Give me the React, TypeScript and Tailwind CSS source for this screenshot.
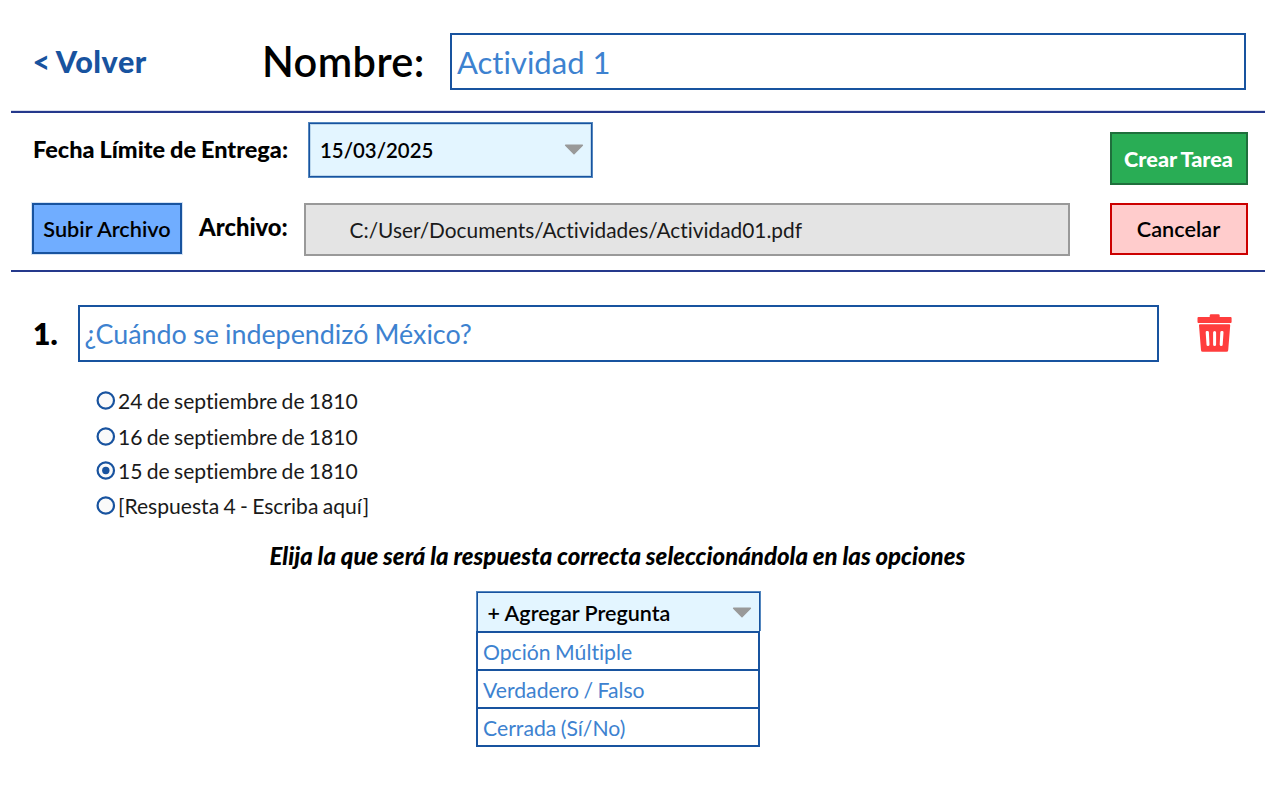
import type { ReactNode } from "react";

function Caret() {
  return (
    <svg width="20" height="12" viewBox="0 0 20 12" className="block shrink-0">
      <path d="M1.6 1.2h16.8L10 9.800z" fill="#999999" stroke="#999999" strokeWidth="1.4" strokeLinejoin="round" />
    </svg>
  );
}

function TrashIcon() {
  return (
    <svg width="36" height="40" viewBox="0 0 36 40" className="-mt-[2px] block shrink-0" fill="#ff3d3d">
      <path d="M12.700 4V2.600a1.300 1.300 0 0 1 1.300-1.300h7.400a1.300 1.300 0 0 1 1.300 1.300V4h10.900a1 1 0 0 1 1 1v3.900a1 1 0 0 1-1 1H1.500a1 1 0 0 1-1-1V5a1 1 0 0 1 1-1z" />
      <path
        fillRule="evenodd"
        d="M3 11.300h29.200a1 1 0 0 1 1 1.100L31.200 37.200a1.700 1.700 0 0 1-1.700 1.600H5.700a1.700 1.700 0 0 1-1.700-1.600L2 12.400a1 1 0 0 1 1-1.100zM10 18a1.300 1.300 0 0 0-1.300 1.400l.8 12a1.500 1.500 0 0 0 3 0l-.6-12A1.400 1.400 0 0 0 10 18zM17.600 18a1.500 1.500 0 0 0-1.500 1.500v12a1.500 1.500 0 0 0 3 0v-12A1.500 1.500 0 0 0 17.600 18zM25.200 18a1.400 1.400 0 0 0-1.900 1.400l-.6 12a1.500 1.500 0 0 0 3 0l.8-12A1.300 1.300 0 0 0 25.200 18z"
      />
    </svg>
  );
}

function Option({ checked = false, className, children }: { checked?: boolean; className: string; children: ReactNode }) {
  return (
    <label className={`flex items-center ${className}`}>
      <svg width="20" height="20" viewBox="0 0 20 20" className="-mt-px block shrink-0">
        <circle cx="9.800" cy="9.500" r="8.200" fill="#fafafa" stroke="#18539f" strokeWidth="2.200" />
        {checked && <circle cx="9.800" cy="9.500" r="3.700" fill="#18539f" />}
      </svg>
      <span className="ml-[2px] text-[21.100px] text-[#1a1a1a] [word-spacing:-1.100px]">{children}</span>
    </label>
  );
}

const questionTypes = ["Opción Múltiple", "Verdadero / Falso", "Cerrada (Sí/No)"];

export default function App() {
  return (
    <main className="h-[800px] w-[1280px] overflow-hidden whitespace-nowrap bg-white font-['Lato',sans-serif] text-black [font-variant-ligatures:none]">
      <header className="flex h-[111px] items-start">
        <a className="ml-[32.500px] mt-[41px] w-[229.500px] text-[30.500px] leading-[40px] font-black tracking-[0.550px] text-[#18539f] [word-spacing:-1.700px]">
          &lt; Volver
        </a>
        <h1 className="mt-[36px] w-[188px] text-[41.500px] leading-[50px] font-semibold tracking-[0.400px]">Nombre:</h1>
        <div className="mt-[33px] flex h-[57px] w-[796px] items-center border-2 border-[#18539f] pt-px pl-[5px] text-[31px] text-[#3d82d0]">
          Actividad 1
        </div>
      </header>

      <section className="mx-[11px] flex h-[161px] w-[1254px] border-y-2 border-[#25398c] shadow-[0_-1px_0_#d9deec]">
        <div className="flex w-[1099px] flex-col">
          <div className="mt-[9px] flex h-[56px] items-center">
            <span className="-mt-px ml-[22px] w-[275px] text-[23.500px] font-black [word-spacing:-0.700px]">Fecha Límite de Entrega:</span>
            <div className="flex h-[56px] w-[285px] items-center justify-between border border-[#5386be] bg-[#e3f5ff] pr-[8px] pl-[11px] shadow-[inset_0_0_0_1px_#18539f,inset_0_0_0_2px_#bcd7ec]">
              <span className="text-[20.400px] font-semibold">15/03/2025</span>
              <Caret />
            </div>
          </div>
          <div className="mt-[25px] flex h-[53px] items-start">
            <button className="ml-[21px] h-[51px] w-[150px] border-2 border-[#18539f] bg-[#70adff] pt-px text-[21.700px] font-semibold shadow-[0_0_0_1px_#d5e3f4]">
              Subir Archivo
            </button>
            <span className="ml-[17px] w-[105px] text-[23.800px] leading-[49px] font-black">Archivo:</span>
            <div className="flex h-[53px] w-[766px] items-center border-2 border-[#999999] bg-[#e4e4e4] pl-[43.500px] text-[20.850px] text-[#1a1a1a]">
              C:/User/Documents/Actividades/Actividad01.pdf
            </div>
          </div>
        </div>
        <div className="flex flex-col pt-[19px]">
          <button className="h-[53px] w-[138px] border-2 border-[#1f6f3c] bg-[#29ad55] pt-px pr-px text-[21.700px] font-black text-white [word-spacing:-0.800px]">
            Crear Tarea
          </button>
          <button className="mt-[18px] h-[52px] w-[138px] border-2 border-[#cc0000] bg-[#ffcccc] pr-px text-[21.700px] font-semibold">Cancelar</button>
        </div>
      </section>

      <section>
        <div className="mt-[33px] flex h-[57px] items-center">
          <span className="ml-[33px] w-[45px] text-[30px] font-extrabold">1.</span>
          <div className="flex h-[57px] w-[1081px] items-center border-2 border-[#18539f] pt-[2px] pl-[4.500px] text-[26.850px] text-[#3d82d0] [word-spacing:-0.700px]">
            ¿Cuándo se independizó México?
          </div>
          <button className="ml-[38px]">
            <TrashIcon />
          </button>
        </div>
        <div className="ml-[96px] mt-[21px] flex flex-col">
          <Option className="h-[36px]">24 de septiembre de 1810</Option>
          <Option className="h-[36px]">16 de septiembre de 1810</Option>
          <Option className="h-[32px]" checked>15 de septiembre de 1810</Option>
          <Option className="h-[38px]">[Respuesta 4 - Escriba aquí]</Option>
        </div>
        <p className="ml-[269.500px] mt-[16px] text-[24px] leading-[30px] font-black italic [word-spacing:-0.350px]">
          Elija la que será la respuesta correcta seleccionándola en las opciones
        </p>
      </section>

      <div className="ml-[476px] mt-[20px] w-[285px]">
        <div className="flex h-[40px] items-center justify-between border border-b-0 border-[#5386be] bg-[#e3f5ff] pt-[3px] pr-[8px] pl-[10.500px] shadow-[inset_1px_1px_0_#18539f,inset_-1px_0_0_#18539f]">
          <span className="text-[21.500px] font-semibold">+ Agregar Pregunta</span>
          <Caret />
        </div>
        <ul className="w-[284px] border-x-2 border-t-2 border-[#18539f]">
          {questionTypes.map((type) => (
            <li
              key={type}
              className="h-[38px] border-b-2 border-[#18539f] bg-white pl-[5px] text-[21.200px] leading-[38px] text-[#3d82d0] [word-spacing:-1px]"
            >
              {type}
            </li>
          ))}
        </ul>
      </div>
    </main>
  );
}
